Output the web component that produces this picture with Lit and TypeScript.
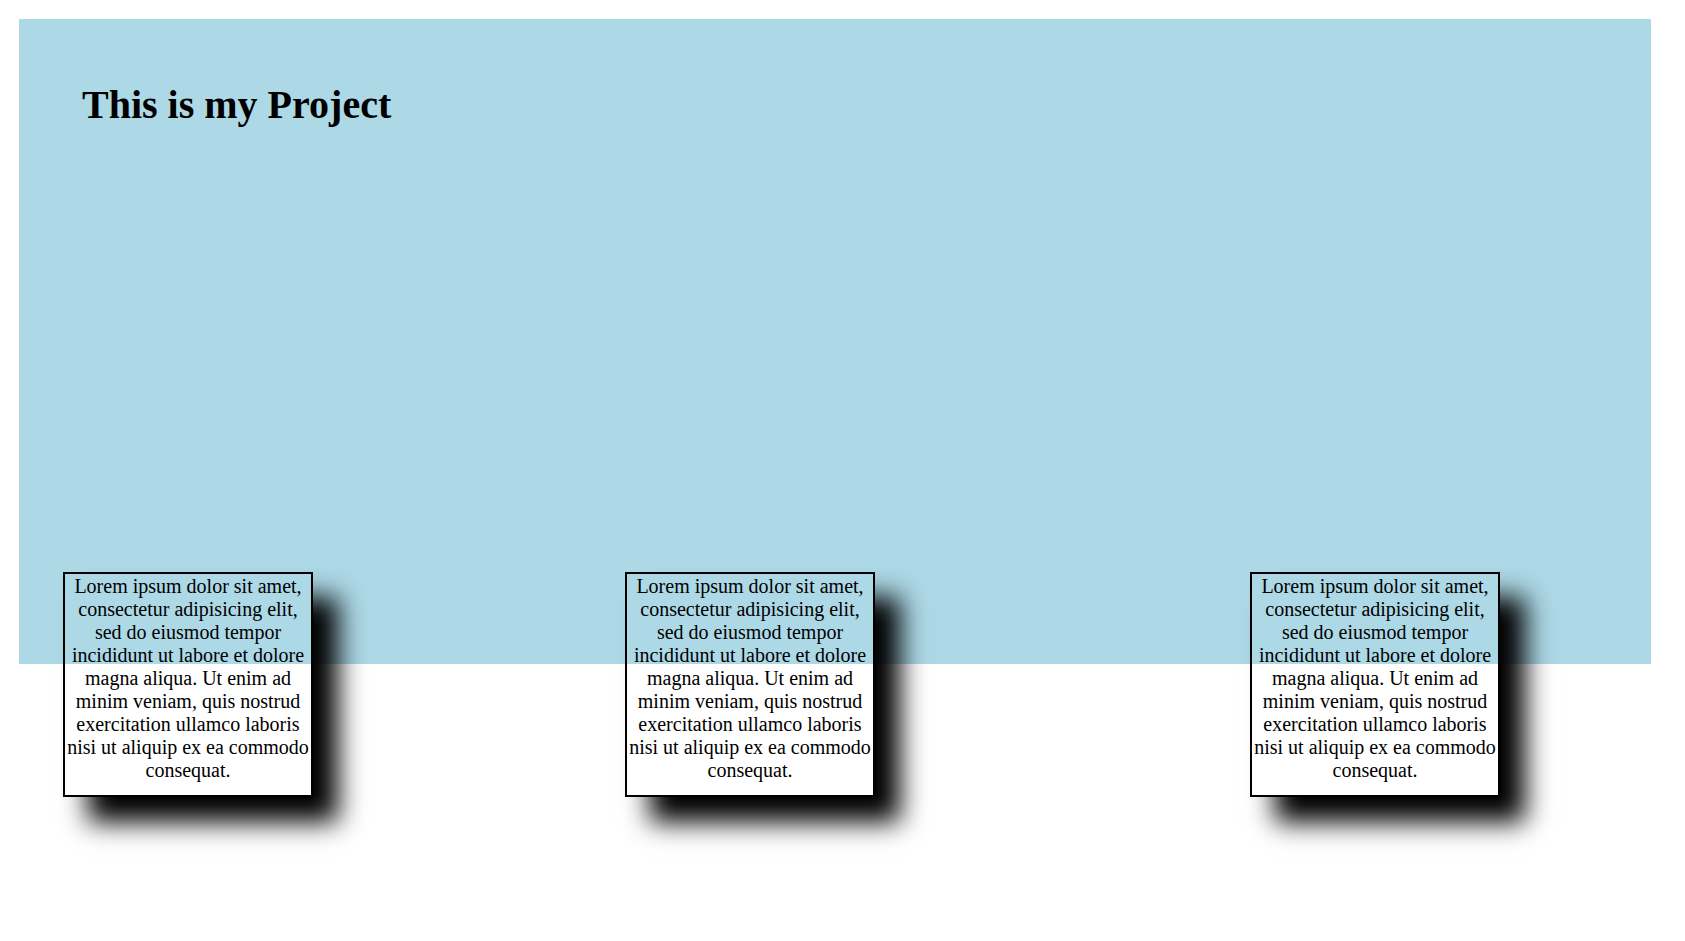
import { LitElement, html, css } from "lit";
import { customElement } from "lit/decorators.js";

@customElement("info-card")
class InfoCard extends LitElement {
  static styles = css`
    :host {
      display: block;
      box-sizing: border-box;
      width: 250px;
      min-height: 225px;
      padding-top: 1px;
      border: 2px solid black;
      box-shadow: 25px 25px 25px black;
      text-align: center;
    }
    .text {
      margin: 0;
    }
  `;

  render() {
    return html`<p class="text"><slot></slot></p>`;
  }
}

@customElement("app-root")
class AppRoot extends LitElement {
  static styles = css`
    :host {
      display: block;
      box-sizing: border-box;
      min-height: 100vh;
      padding: 19px 34px 64px 19px;
      background: white;
      color: black;
      font: 20px/23px "Liberation Serif", "Times New Roman", serif;
    }
    .hero {
      box-sizing: border-box;
      min-height: 645px;
      padding: 63px;
      background: lightblue;
    }
    .title {
      margin: 0;
      font-size: 40px;
      line-height: 46px;
    }
    .cards {
      display: grid;
      grid-template-columns: 562fr 625fr 401fr;
      margin-top: -92px;
      padding-left: 44px;
    }
  `;

  private copy =
    "Lorem ipsum dolor sit amet, consectetur adipisicing elit, sed do eiusmod tempor incididunt ut labore et dolore magna aliqua. Ut enim ad minim veniam, quis nostrud exercitation ullamco laboris nisi ut aliquip ex ea commodo consequat.";

  render() {
    return html`
      <header class="hero">
        <h1 class="title">This is my Project</h1>
      </header>
      <main class="cards">
        ${[0, 1, 2].map(() => html`<info-card>${this.copy}</info-card>`)}
      </main>
    `;
  }
}
